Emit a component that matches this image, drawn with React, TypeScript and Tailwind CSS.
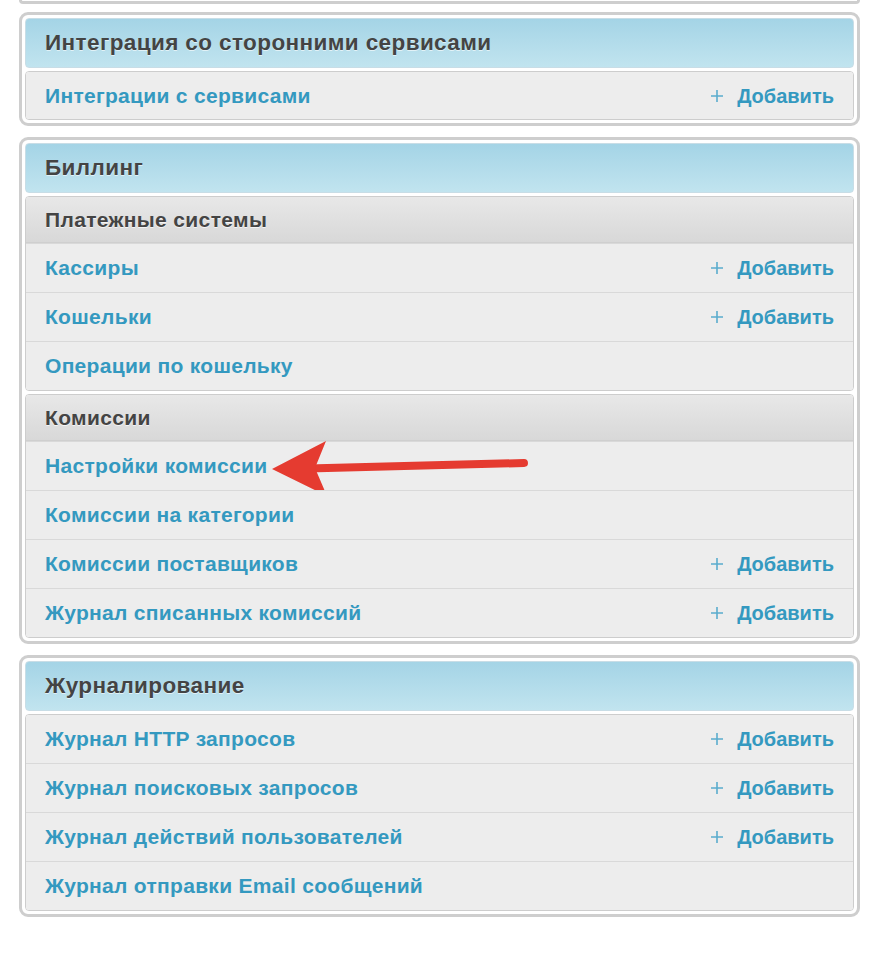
import React from "react";

type Row = { label: string; add?: boolean; arrow?: boolean };
type Group = { title?: string; rows: Row[] };
type Section = { title: string; groups: Group[] };

const sections: Section[] = [
  {
    title: "Интеграция со сторонними сервисами",
    groups: [{ rows: [{ label: "Интеграции с сервисами", add: true }] }],
  },
  {
    title: "Биллинг",
    groups: [
      {
        title: "Платежные системы",
        rows: [
          { label: "Кассиры", add: true },
          { label: "Кошельки", add: true },
          { label: "Операции по кошельку" },
        ],
      },
      {
        title: "Комиссии",
        rows: [
          { label: "Настройки комиссии", arrow: true },
          { label: "Комиссии на категории" },
          { label: "Комиссии поставщиков", add: true },
          { label: "Журнал списанных комиссий", add: true },
        ],
      },
    ],
  },
  {
    title: "Журналирование",
    groups: [
      {
        rows: [
          { label: "Журнал HTTP запросов", add: true },
          { label: "Журнал поисковых запросов", add: true },
          { label: "Журнал действий пользователей", add: true },
          { label: "Журнал отправки Email сообщений" },
        ],
      },
    ],
  },
];

function Arrow() {
  return (
    <svg className="absolute left-[242px] top-[-28px]" width="264" height="60" viewBox="0 0 264 60">
      <path d="M40 30.5 L256 25" stroke="#e53b30" strokeWidth="8" strokeLinecap="round" />
      <path d="M4 31 L58 3 L47 30 L59 58 Z" fill="#e53b30" />
    </svg>
  );
}

function ItemRow({ row, single }: { row: Row; single?: boolean }) {
  return (
    <div
      className={`relative flex items-center justify-between ${single ? "h-[47px]" : "h-[49px] first:h-[48px]"} px-[19px] bg-[#ededed] border-t border-[#d9d9d9] first:border-t-0`}
    >
      <span className="text-[21px] tracking-[0.3px] font-bold text-[#3499c0]">{row.label}</span>
      {row.add && (
        <span className="flex items-center gap-[13px] text-[20px] font-bold text-[#3499c0]">
          <svg width="14" height="14" viewBox="0 0 14 14">
            <path d="M7 1v12M1 7h12" stroke="#5aaccd" strokeWidth="1.6" />
          </svg>
          Добавить
        </span>
      )}
      {row.arrow && (
        <div className="absolute left-0 top-1/2">
          <Arrow />
        </div>
      )}
    </div>
  );
}

function Panel({ section }: { section: Section }) {
  const single = section.groups.length === 1 && section.groups[0].rows.length === 1;
  return (
    <div className="border-[3px] border-[#cecece] rounded-[9px] p-[3px] flex flex-col gap-[3px] bg-white">
      <div className="h-[50px] flex items-center px-[19px] rounded-[4px] border border-[#c8dde6] bg-gradient-to-b from-[#a4d4e6] to-[#c1e4ef]">
        <span className="text-[22.5px] tracking-[0.4px] font-bold text-[#444] [text-shadow:0_1px_0_rgba(255,255,255,0.6)]">
          {section.title}
        </span>
      </div>
      {section.groups.map((g, i) => (
        <div key={i} className="border border-[#cdcdcd] rounded-[4px] overflow-hidden">
          {g.title && (
            <div className="h-[46px] flex items-center px-[19px] border-b border-[#cfcfcf] bg-gradient-to-b from-[#e8e8e8] to-[#d8d8d8]">
              <span className="text-[21px] tracking-[0.35px] font-bold text-[#444] [text-shadow:0_1px_0_rgba(255,255,255,0.7)]">
                {g.title}
              </span>
            </div>
          )}
          {g.rows.map((r) => (
            <ItemRow key={r.label} row={r} single={single} />
          ))}
        </div>
      ))}
    </div>
  );
}

export default function App() {
  return (
    <div className="w-[880px] h-[954px] bg-white pl-[19px] pr-[20px] font-['Liberation_Sans',Arial,sans-serif]">
      <div className="h-[4px] border-[3px] border-t-0 border-[#cecece] rounded-b-[9px]" />
      <div className="flex flex-col gap-[11px] pt-[8px]">
        {sections.map((s) => (
          <Panel key={s.title} section={s} />
        ))}
      </div>
    </div>
  );
}
